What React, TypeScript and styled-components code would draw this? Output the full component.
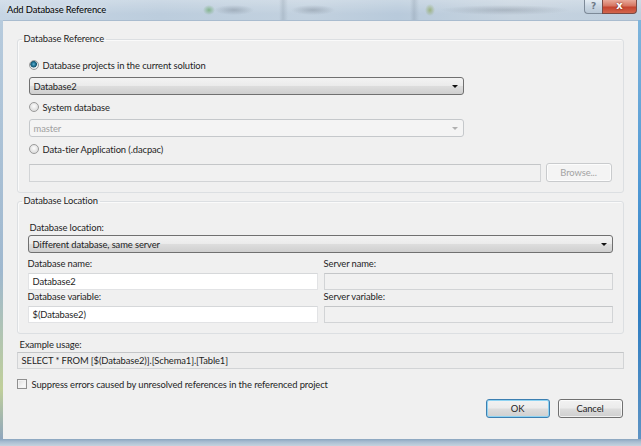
import styled, { createGlobalStyle } from 'styled-components';

const GlobalStyle = createGlobalStyle`
  html, body {
    margin: 0;
    padding: 0;
  }
  body {
    width: 641px;
    height: 446px;
    overflow: hidden;
    background: #9db6cf;
    font-family: Lato, 'Noto Sans', sans-serif;
    font-size: 9.4px;
    letter-spacing: -0.1px;
    color: #1e1e1e;
  }
  * {
    box-sizing: border-box;
  }
`;

export default function App() {
  return (
    <>
      <GlobalStyle />
      <Window>
        <TitleBar>
          <Title>Add Database Reference</Title>
          <CaptionButtons>
            <HelpButton>?</HelpButton>
            <CloseButton>x</CloseButton>
          </CaptionButtons>
        </TitleBar>

        <Body>
          <LeftEdge />
          <Client>
            <GroupBox>
              <Legend>Database Reference</Legend>
              <GroupContent>
                <RadioRow>
                  <Radio $checked />
                  <span>Database projects in the current solution</span>
                </RadioRow>
                <Combo $width={435}>
                  <span>Database2</span>
                  <Arrow />
                </Combo>

                <RadioRow>
                  <Radio />
                  <span>System database</span>
                </RadioRow>
                <Combo $width={435} $disabled>
                  <span>master</span>
                  <Arrow $disabled />
                </Combo>

                <RadioRow>
                  <Radio />
                  <span>Data-tier Application (.dacpac)</span>
                </RadioRow>
                <FileRow>
                  <TextBox $width={512} $height={18} $disabled />
                  <Button $width={66} $disabled>Browse...</Button>
                </FileRow>
              </GroupContent>
            </GroupBox>

            <GroupBox $gap={1}>
              <Legend>Database Location</Legend>
              <LocationContent>
                <FieldLabel $indent={2}>Database location:</FieldLabel>
                <Combo>
                  <span>Different database, same server</span>
                  <Arrow />
                </Combo>
                <FieldGrid>
                  <FieldLabel>Database name:</FieldLabel>
                  <FieldLabel>Server name:</FieldLabel>
                  <TextBox>Database2</TextBox>
                  <TextBox $disabled />
                  <FieldLabel>Database variable:</FieldLabel>
                  <FieldLabel>Server variable:</FieldLabel>
                  <TextBox>$(Database2)</TextBox>
                  <TextBox $disabled />
                </FieldGrid>
              </LocationContent>
            </GroupBox>

            <ExampleLabel>Example usage:</ExampleLabel>
            <TextBox $disabled $readOnly>SELECT * FROM [$(Database2)].[Schema1].[Table1]</TextBox>

            <CheckRow>
              <CheckBox />
              <span>Suppress errors caused by unresolved references in the referenced project</span>
            </CheckRow>

            <ButtonRow>
              <Button $width={64} $default>OK</Button>
              <Button $width={65}>Cancel</Button>
            </ButtonRow>
          </Client>
          <RightEdge />
        </Body>
        <BottomEdge />
      </Window>
    </>
  );
}

const Window = styled.div`
  width: 641px;
  height: 446px;
  display: flex;
  flex-direction: column;
  background: #a9c1d8;
`;

// glass title bar: the blurred toolbar behind the window shows through
const TitleBar = styled.div`
  height: 20px;
  display: flex;
  align-items: flex-start;
  justify-content: space-between;
  padding-left: 7px;
  padding-right: 4px;
  background:
    radial-gradient(ellipse 6px 5px at 209px 10px, rgba(70, 150, 60, 0.5), transparent),
    radial-gradient(ellipse 5px 6px at 430px 10px, rgba(120, 150, 40, 0.5), transparent),
    radial-gradient(ellipse 20px 5px at 234px 10px, rgba(60, 70, 85, 0.25), transparent),
    radial-gradient(ellipse 22px 5px at 313px 10px, rgba(60, 70, 85, 0.25), transparent),
    radial-gradient(ellipse 65px 5px at 505px 10px, rgba(60, 70, 85, 0.22), transparent),
    linear-gradient(90deg, transparent 279px, rgba(110, 125, 140, 0.22) 283px, transparent 288px),
    linear-gradient(90deg, transparent 410px, rgba(110, 125, 140, 0.22) 414px, transparent 419px),
    linear-gradient(180deg, rgba(255, 255, 255, 0.25), rgba(255, 255, 255, 0) 70%),
    linear-gradient(90deg, #c6d5e4 0%, #bccddd 25%, #c2d1df 48%, #b8cadb 62%, #c6d3df 80%, #bfcfde 100%);
`;

const Title = styled.div`
  line-height: 20px;
  color: #000;
  text-shadow: 0 0 6px rgba(255, 255, 255, 0.9);
`;

const CaptionButtons = styled.div`
  display: flex;
`;

const HelpButton = styled.div`
  width: 18px;
  height: 14px;
  border: 1px solid #7d8a98;
  border-top: none;
  border-right: none;
  border-radius: 0 0 0 4px;
  background: linear-gradient(180deg, #e4ecf3 0%, #c9d6e2 50%, #b9c8d6 100%);
  color: #6e7a86;
  font-family: 'DejaVu Sans', sans-serif;
  font-size: 9px;
  font-weight: 700;
  line-height: 13px;
  text-align: center;
`;

const CloseButton = styled.div`
  width: 35px;
  height: 14px;
  border: 1px solid #7a4a44;
  border-top: none;
  border-radius: 0 0 4px 0;
  background: linear-gradient(180deg, #e9a999 0%, #d67662 45%, #c5442f 55%, #d2664d 100%);
  color: #fff;
  font-family: 'DejaVu Sans', sans-serif;
  font-size: 10px;
  font-weight: 700;
  line-height: 12px;
  text-align: center;
  text-shadow: 0 0 2px #5a1a10;
`;

const Body = styled.div`
  flex: 1;
  display: flex;
  min-height: 0;
`;

const LeftEdge = styled.div`
  width: 3px;
  background: linear-gradient(180deg, #b7cbdd, #9fb8cf 60%, #c0cf9a 88%, #8fa6bd);
`;

const RightEdge = styled.div`
  width: 4px;
  background: linear-gradient(180deg, #7fb5dc, #4f98d4 40%, #2f7ec2 70%, #5d93c4);
`;

const BottomEdge = styled.div`
  height: 7px;
  background: linear-gradient(180deg, #8aa5bf, #a8bdd1 40%, #c5d3df);
`;

const Client = styled.div`
  flex: 1;
  display: flex;
  flex-direction: column;
  padding: 0 14px;
  background: #f0f0f0;
  border-top: 1px solid #a9bccf;
`;

const GroupBox = styled.fieldset<{ $gap?: number }>`
  margin: ${p => (p.$gap ?? 11)}px 0 0;
  padding: 0;
  min-width: 0;
  border: 1px solid #dcdfe2;
  border-radius: 3px;
  box-shadow: inset 1px 1px 0 #fafafa;
`;

const Legend = styled.legend`
  margin-left: 4px;
  padding: 0 2px;
  line-height: 14px;
  color: #1e1e1e;
`;

const GroupContent = styled.div`
  display: flex;
  flex-direction: column;
  gap: 4px;
  padding: 11px 11px 10px;
`;

const LocationContent = styled.div`
  display: flex;
  flex-direction: column;
  padding: 13px 10px 10px;
`;

const RadioRow = styled.div`
  height: 16px;
  display: flex;
  align-items: center;
  gap: 4px;
`;

const Radio = styled.span<{ $checked?: boolean }>`
  width: 10px;
  height: 10px;
  border-radius: 50%;
  border: 1px solid #9a9a9a;
  background: ${p =>
    p.$checked
      ? 'radial-gradient(circle at 45% 40%, #5fb3d6 0, #1f6f8f 2px, #1a5670 3px, #e6ecef 3.6px, #dfe3e6 100%)'
      : 'radial-gradient(circle at 50% 40%, #fdfdfd 0, #e7e7e7 3px, #d4d4d4 100%)'};
`;

const Combo = styled.div<{ $width?: number; $disabled?: boolean }>`
  width: ${p => (p.$width ? `${p.$width}px` : '100%')};
  height: 18px;
  display: flex;
  align-items: center;
  justify-content: space-between;
  padding: 0 5px 0 4px;
  border: 1px solid ${p => (p.$disabled ? '#c5c8cb' : '#707070')};
  border-radius: 3px;
  color: ${p => (p.$disabled ? '#a0a0a0' : '#1e1e1e')};
  background: ${p =>
    p.$disabled
      ? '#f4f4f4'
      : 'linear-gradient(180deg, #f3f3f3 0%, #ebebeb 48%, #dddddd 52%, #cfcfcf 100%)'};
`;

const Arrow = styled.span<{ $disabled?: boolean }>`
  width: 0;
  height: 0;
  border-left: 3px solid transparent;
  border-right: 3px solid transparent;
  border-top: 3px solid ${p => (p.$disabled ? '#b0b0b0' : '#111')};
  margin-top: 1px;
`;

const FileRow = styled.div`
  margin-top: 2px;
  display: flex;
  align-items: center;
  gap: 5px;
`;

const TextBox = styled.div<{ $width?: number; $height?: number; $disabled?: boolean; $readOnly?: boolean }>`
  width: ${p => (p.$width ? `${p.$width}px` : '100%')};
  height: ${p => p.$height ?? 17}px;
  flex-shrink: 0;
  display: flex;
  align-items: center;
  padding: 0 4px;
  border: 1px solid ${p => (p.$disabled ? '#d2d4d6' : '#e2e3e5')};
  border-top-color: ${p => (p.$disabled ? '#c4c6c8' : '#d6d8da')};
  background: ${p => (p.$disabled ? (p.$readOnly ? '#ededed' : '#f1f1f1') : '#ffffff')};
  color: #1e1e1e;
  white-space: nowrap;
`;

const Button = styled.div<{ $width: number; $default?: boolean; $disabled?: boolean }>`
  width: ${p => p.$width}px;
  height: 19px;
  display: flex;
  align-items: center;
  justify-content: center;
  border: 1px solid ${p => (p.$default ? '#3c7fb1' : p.$disabled ? '#c9cbcd' : '#707070')};
  border-radius: 3px;
  color: ${p => (p.$disabled ? '#a3a3a3' : '#1e1e1e')};
  background: ${p =>
    p.$disabled
      ? '#f4f4f4'
      : 'linear-gradient(180deg, #f2f2f2 0%, #ebebeb 48%, #dddddd 52%, #cfcfcf 100%)'};
  box-shadow: ${p =>
    p.$default ? 'inset 0 0 0 1px #8ed3f2' : 'inset 0 0 0 1px rgba(255, 255, 255, 0.7)'};
`;

const FieldLabel = styled.div<{ $indent?: number }>`
  height: 14px;
  line-height: 14px;
  padding-left: ${p => p.$indent ?? 0}px;
  color: #1e1e1e;
`;

const FieldGrid = styled.div`
  margin-top: 4px;
  display: grid;
  grid-template-columns: 290px 1fr;
  column-gap: 6px;
  & > :nth-child(4n + 3),
  & > :nth-child(4n + 4) {
    margin-top: 2px;
  }
  & > :nth-child(5),
  & > :nth-child(6) {
    margin-top: 0;
  }
`;

const ExampleLabel = styled.div`
  margin-top: 4px;
  height: 14px;
  line-height: 14px;
  padding-left: 3px;
`;

const CheckRow = styled.div`
  margin-top: 8px;
  height: 14px;
  display: flex;
  align-items: center;
  gap: 5px;
`;

const CheckBox = styled.span`
  width: 10px;
  height: 10px;
  border: 1px solid #8f8f8f;
  background: linear-gradient(135deg, #dcdcdc 0%, #f4f4f4 60%, #fbfbfb 100%);
  box-shadow: inset 0 0 0 1px #f2f2f2;
`;

const ButtonRow = styled.div`
  margin-top: 8px;
  padding-right: 1px;
  display: flex;
  justify-content: flex-end;
  gap: 8px;
`;
